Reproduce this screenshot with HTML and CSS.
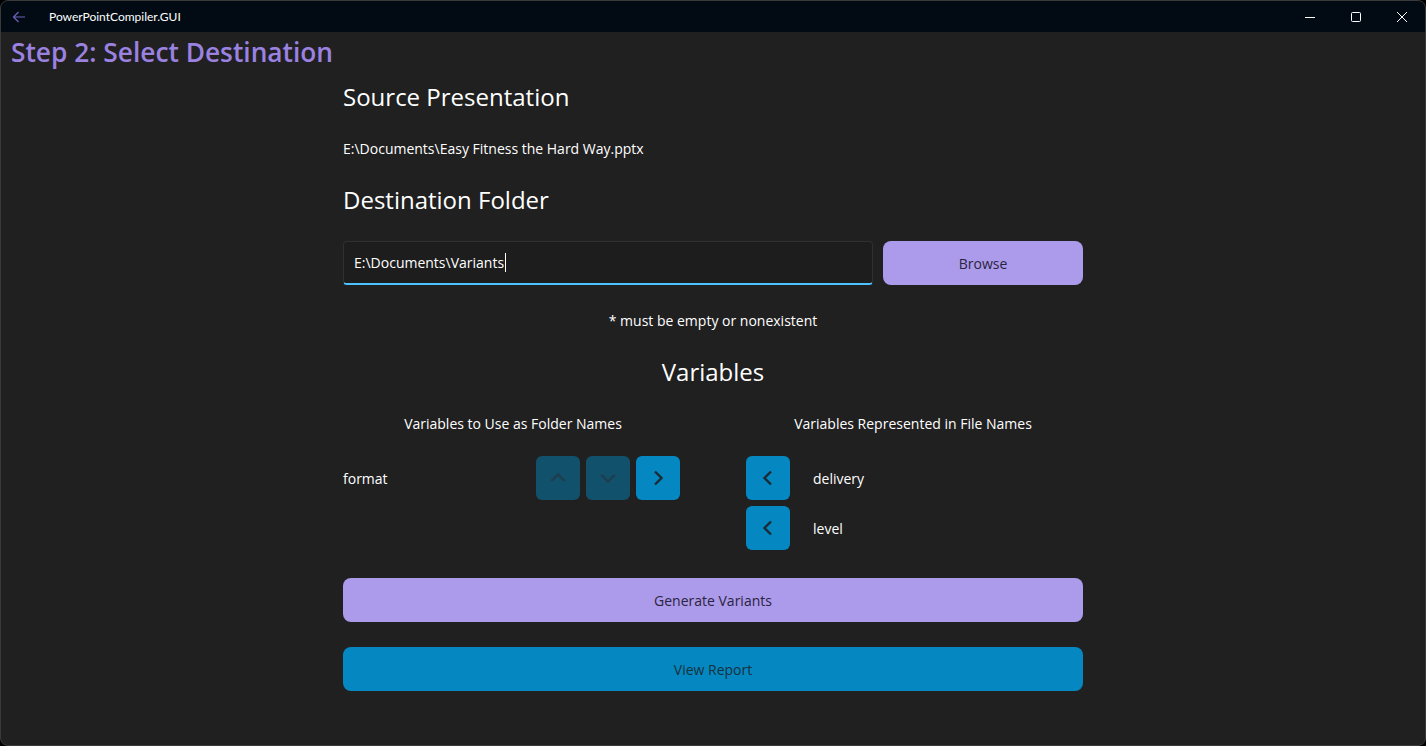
FILE: index.html
```html
<!DOCTYPE html>
<html lang="en">
<head>
    <meta charset="UTF-8">
    <title>PowerPointCompiler.GUI</title>
    <link rel="stylesheet" href="styles.css">
</head>
<body>
<div class="window">
    <div class="titlebar">
        <div class="back">
            <svg width="16" height="16" viewBox="0 0 16 16"><path d="M14 8H2.5M7.5 3L2.5 8l5 5" fill="none" stroke="#6f61c0" stroke-width="1.2"/></svg>
        </div>
        <span class="app-title">PowerPointCompiler.GUI</span>
        <div class="controls">
            <div class="ctl"><svg width="12" height="12" viewBox="0 0 12 12"><path d="M1 6.5h10" stroke="#fff" stroke-width="1"/></svg></div>
            <div class="ctl"><svg width="12" height="12" viewBox="0 0 12 12"><rect x="1.5" y="1.5" width="9" height="9" rx="1" fill="none" stroke="#fff" stroke-width="1"/></svg></div>
            <div class="ctl"><svg width="12" height="12" viewBox="0 0 12 12"><path d="M1 1l10 10M11 1L1 11" stroke="#fff" stroke-width="1"/></svg></div>
        </div>
    </div>

    <h1 class="page-title">Step 2: Select Destination</h1>

    <div class="content">
        <h2 class="section">Source Presentation</h2>
        <p class="text">E:\Documents\Easy Fitness the Hard Way.pptx</p>

        <h2 class="section">Destination Folder</h2>
        <div class="dest-row">
            <div class="input">E:\Documents\Variants<span class="caret"></span></div>
            <button class="btn purple browse">Browse</button>
        </div>
        <p class="text center">* must be empty or nonexistent</p>

        <h2 class="section center">Variables</h2>
        <div class="vars">
            <div class="col">
                <p class="text center">Variables to Use as Folder Names</p>
                <div class="rows">
                    <div class="row">
                        <span class="label">format</span>
                        <div class="icons">
                            <div class="cell"><div class="ibtn off"><svg width="18" height="18" viewBox="0 0 18 18"><path d="M2.5 12L9 5.5l6.5 6.5" fill="none" stroke="#1f3d4c" stroke-width="2.4"/></svg></div></div>
                            <div class="cell"><div class="ibtn off"><svg width="18" height="18" viewBox="0 0 18 18"><path d="M2.5 6L9 12.5l6.5-6.5" fill="none" stroke="#1f3d4c" stroke-width="2.4"/></svg></div></div>
                            <div class="cell"><div class="ibtn"><svg width="18" height="18" viewBox="0 0 18 18"><path d="M6 2.5l6.5 6.5L6 15.5" fill="none" stroke="#1b2a33" stroke-width="2.4"/></svg></div></div>
                        </div>
                    </div>
                </div>
            </div>
            <div class="col">
                <p class="text center">Variables Represented in File Names</p>
                <div class="rows">
                    <div class="row">
                        <div class="cell"><div class="ibtn"><svg width="18" height="18" viewBox="0 0 18 18"><path d="M12 2.5L5.5 9l6.5 6.5" fill="none" stroke="#1b2a33" stroke-width="2.4"/></svg></div></div>
                        <span class="label right">delivery</span>
                    </div>
                    <div class="row">
                        <div class="cell"><div class="ibtn"><svg width="18" height="18" viewBox="0 0 18 18"><path d="M12 2.5L5.5 9l6.5 6.5" fill="none" stroke="#1b2a33" stroke-width="2.4"/></svg></div></div>
                        <span class="label right">level</span>
                    </div>
                </div>
            </div>
        </div>

        <button class="btn purple wide">Generate Variants</button>
        <button class="btn blue wide">View Report</button>
    </div>
</div>
</body>
</html>
```

FILE: styles.css
```css
html, body {
    margin: 0;
    padding: 0;
    background-color: #000;
}
body {
    font-family: "Open Sans", "Noto Sans", sans-serif;
    color: #fff;
}
.window {
    width: 1426px;
    height: 746px;
    box-sizing: border-box;
    border: 1px solid #3a3a3a;
    border-radius: 8px;
    background-color: #202020;
    overflow: hidden;
}
.titlebar {
    height: 31px;
    background-color: #020b13;
    display: flex;
    align-items: center;
}
.back {
    width: 36px;
    display: flex;
    justify-content: center;
    padding-top: 1px;
}
.app-title {
    margin-left: 12px;
    font-family: Lato, "Open Sans", sans-serif;
    font-size: 12px;
    color: #fff;
}
.controls {
    margin-left: auto;
    display: flex;
    height: 100%;
}
.ctl {
    width: 46px;
    display: flex;
    align-items: center;
    justify-content: center;
}
.page-title {
    margin: 0;
    padding-left: 10px;
    font-size: 26.3px;
    font-weight: 600;
    line-height: 41px;
    color: #9b82e0;
}
.content {
    width: 740px;
    margin: 8px auto 0;
    display: flex;
    flex-direction: column;
    gap: 25px;
}
.section {
    margin: 0;
    font-size: 24px;
    font-weight: 400;
    line-height: 32px;
}
.text {
    margin: 0;
    font-size: 14px;
    line-height: 21px;
}
.center {
    text-align: center;
}
.dest-row {
    display: flex;
    gap: 10px;
    height: 44px;
}
.input {
    flex: 1;
    box-sizing: border-box;
    background-color: #1d1d1d;
    border: 1px solid #303030;
    border-bottom: 2px solid #4cc2ff;
    border-radius: 4px;
    padding: 0 10px;
    font-size: 14px;
    display: flex;
    align-items: center;
}
.caret {
    display: inline-block;
    width: 1px;
    height: 19px;
    background-color: #fff;
    margin-left: 1px;
}
.btn {
    border: none;
    border-radius: 8px;
    height: 44px;
    font-family: "Open Sans", "Noto Sans", sans-serif;
    font-size: 14px;
    padding: 0;
}
.purple {
    background-color: #ac9aea;
    color: #2a2440;
}
.blue {
    background-color: #0588c1;
    color: #17303d;
}
.browse {
    width: 200px;
}
.wide {
    width: 100%;
}
.vars {
    display: grid;
    grid-template-columns: 340px 340px;
    column-gap: 60px;
}
.col .rows {
    margin-top: 19px;
}
.row {
    display: flex;
    align-items: center;
    height: 50px;
}
.label {
    font-size: 14px;
}
.label.right {
    margin-left: 20px;
}
.icons {
    margin-left: auto;
    display: flex;
}
.cell {
    width: 50px;
    height: 50px;
    display: flex;
    align-items: center;
    justify-content: center;
}
.ibtn {
    width: 44px;
    height: 44px;
    border-radius: 6px;
    background-color: #0588c1;
    display: flex;
    align-items: center;
    justify-content: center;
}
.ibtn.off {
    background-color: #12516c;
}
```
